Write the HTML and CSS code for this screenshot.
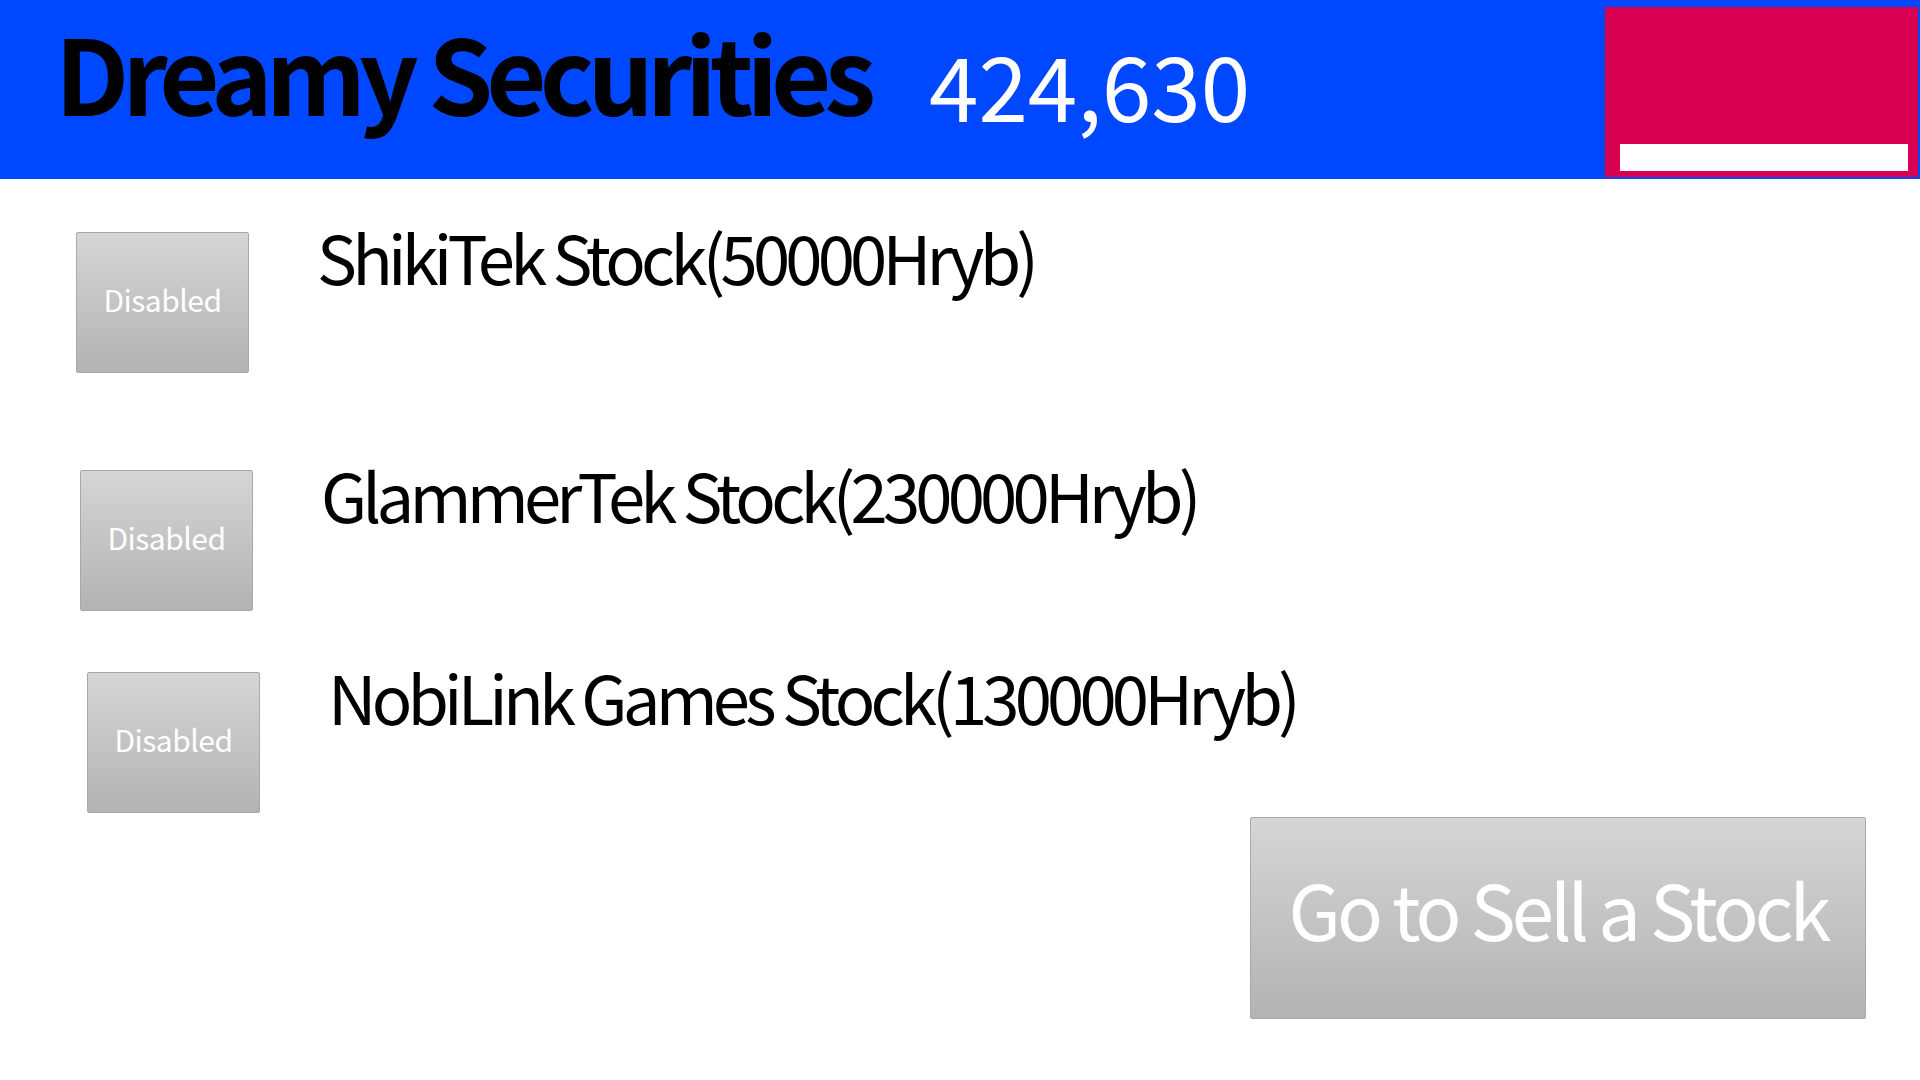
FILE: index.html
```html
<!DOCTYPE html>
<html lang="en">
<head>
	<title>Dreamy Securities</title>
	<link rel="stylesheet" href="styles.css">
</head>
<body>
	<div id="header">
		<h1 class="title">Dreamy Securities</h1>
		<div class="money">424,630</div>
		<div class="stamina">
			<div class="stamina-bar"></div>
		</div>
	</div>

	<div id="stocks">
		<div class="stock-row row-1">
			<button class="btn-buy" disabled>Disabled</button>
			<span class="stock-name">ShikiTek Stock(50000Hryb)</span>
		</div>
		<div class="stock-row row-2">
			<button class="btn-buy" disabled>Disabled</button>
			<span class="stock-name">GlammerTek Stock(230000Hryb)</span>
		</div>
		<div class="stock-row row-3">
			<button class="btn-buy" disabled>Disabled</button>
			<span class="stock-name">NobiLink Games Stock(130000Hryb)</span>
		</div>
	</div>

	<div id="footer">
		<button class="btn-sell">Go to Sell a Stock</button>
	</div>
</body>
</html>
```

FILE: styles.css
```css
body {
	margin: 0;
	background-color: white;
	color: black;
	font-family: "Noto Sans CJK KR", "Noto Sans", sans-serif;
}

#header {
	display: flex;
	align-items: flex-start;
	height: 179px;
	background-color: #0048ff;
}

.title {
	flex: none;
	margin: 7px 0 0 55px;
	padding-right: 8px;
	font-size: 104px;
	font-weight: 700;
	line-height: 1.24;
	letter-spacing: -7px;
	white-space: nowrap;
}

.money {
	flex: none;
	margin: 39px 0 0 52px;
	color: white;
	font-size: 89px;
	line-height: 1;
}

.stamina {
	display: flex;
	flex-direction: column;
	justify-content: flex-end;
	box-sizing: border-box;
	width: 313px;
	height: 170px;
	margin: 7px 2px 0 auto;
	padding: 0 10px 6px 15px;
	background-color: #d90052;
}

.stamina-bar {
	height: 27px;
	background-color: white;
}

.stock-row {
	display: flex;
	align-items: flex-start;
	gap: 68px;
}

.row-1 { margin: 43px 0 0 76px; }
.row-2 { margin: 87px 0 0 80px; }
.row-3 { margin: 51px 0 0 87px; }

.btn-buy, .btn-sell {
	box-sizing: border-box;
	border: 1px solid #a8a8a8;
	border-radius: 2px;
	background: linear-gradient(#d5d5d5, #b3b3b3);
	color: white;
	font-family: inherit;
	padding: 0;
	white-space: nowrap;
}

.btn-buy {
	width: 173px;
	height: 141px;
	margin-top: 10px;
	padding-bottom: 8px;
	font-size: 30px;
	letter-spacing: -0.5px;
}

.stock-name {
	padding-right: 6px;
	font-size: 67px;
	line-height: 1;
	letter-spacing: -4.8px;
	white-space: nowrap;
}

#footer {
	display: flex;
	justify-content: flex-end;
	padding: 4px 54px 0 0;
}

.btn-sell {
	width: 616px;
	height: 202px;
	padding-bottom: 20px;
	font-size: 76px;
	letter-spacing: -4px;
}
```
